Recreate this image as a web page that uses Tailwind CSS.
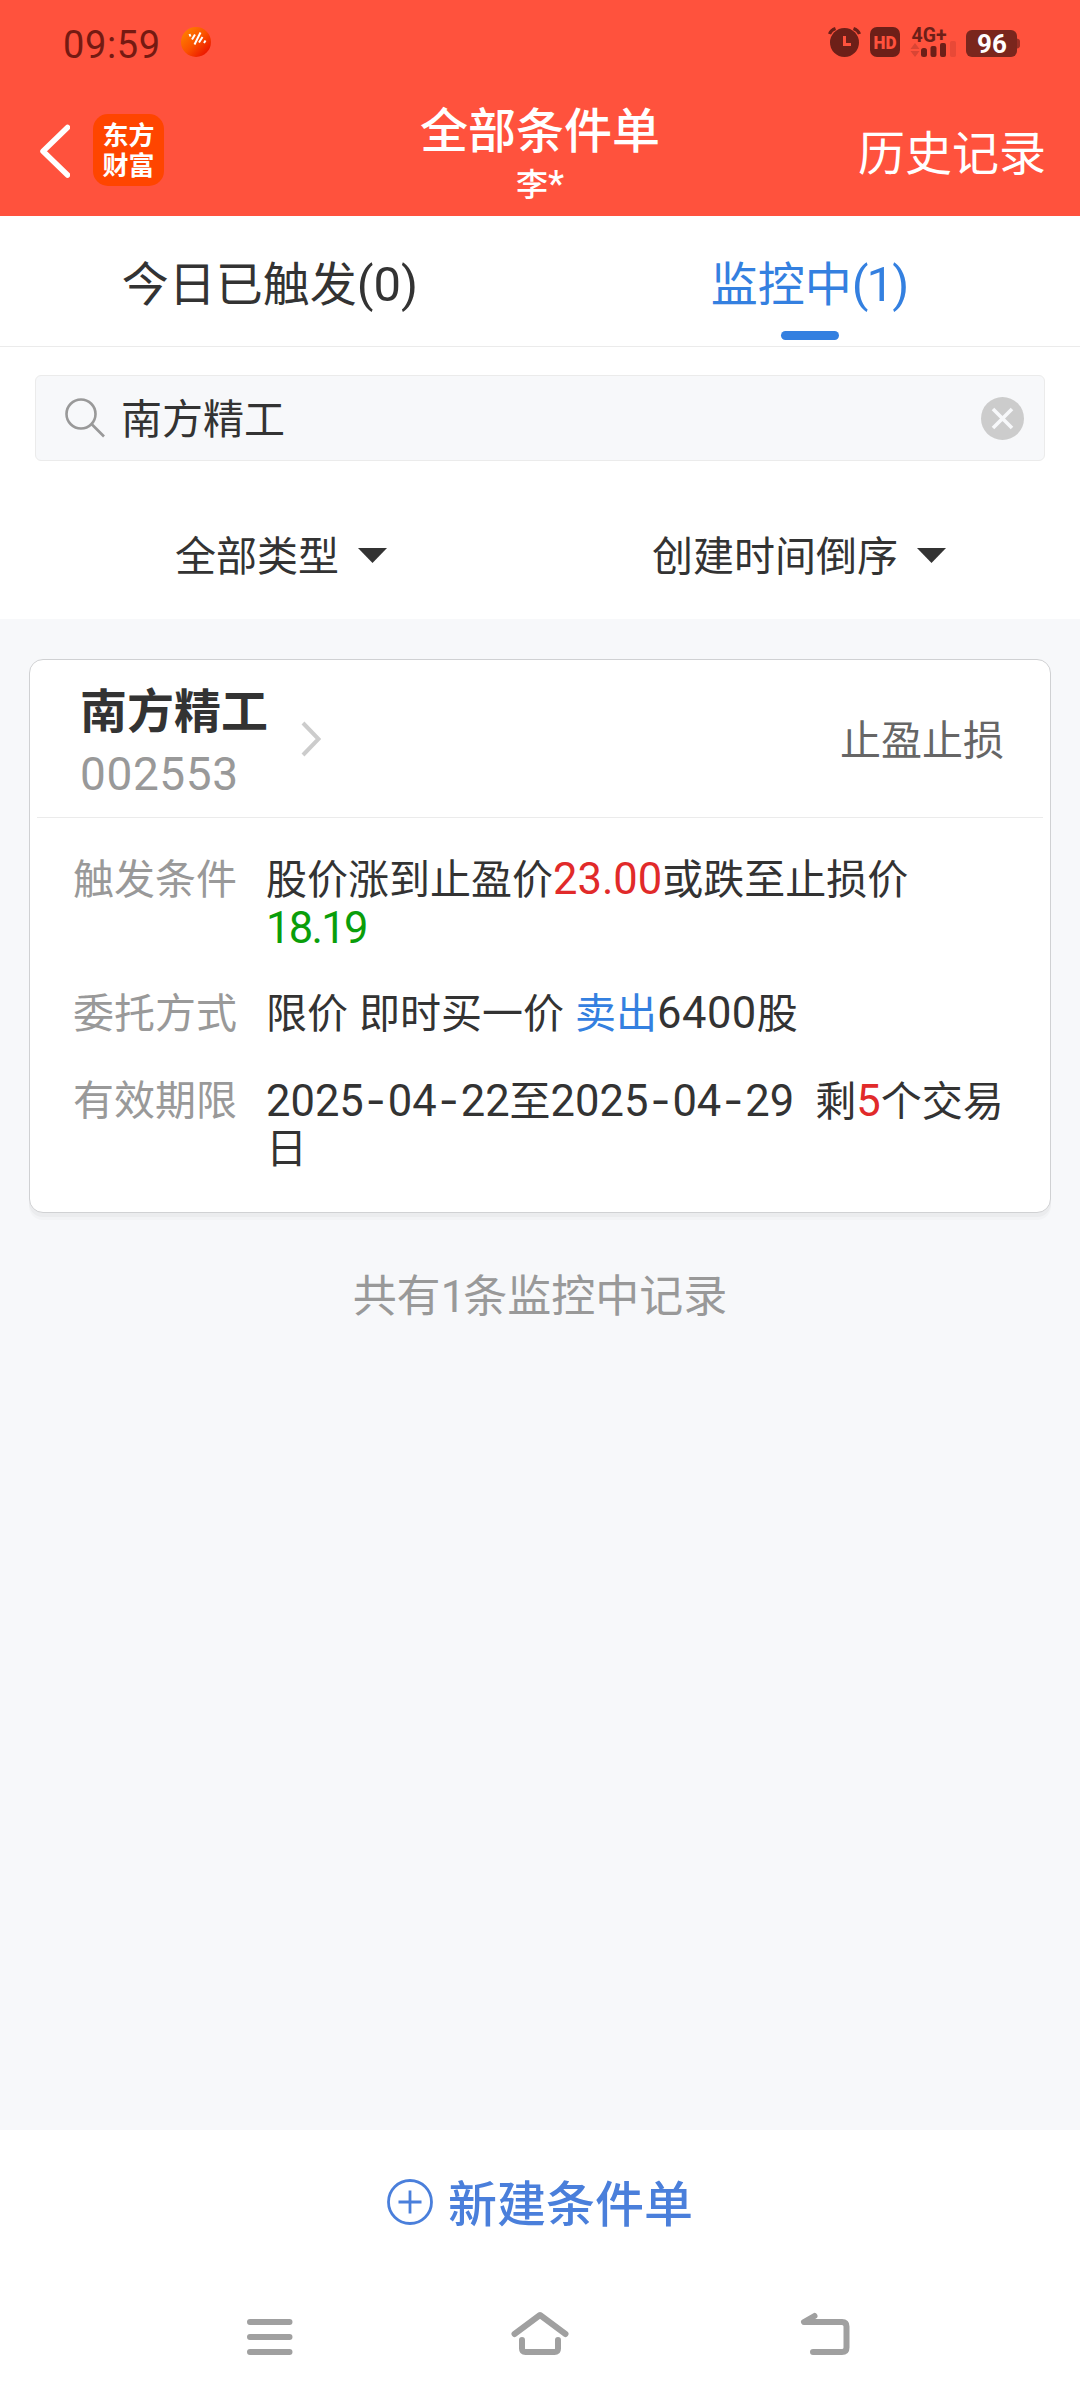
<!DOCTYPE html>
<html lang="zh-CN">
<head>
<meta charset="utf-8">
<title>全部条件单</title>
<script src="https://cdn.jsdelivr.net/npm/@tailwindcss/browser@4"></script>
</head>
<body class="flex h-[2400px] w-[1080px] flex-col overflow-hidden bg-[#f7f8fa] font-['Roboto','Noto_Sans_CJK_SC',sans-serif] text-[#333]">

<header class="flex h-[216px] flex-col bg-[#ff523d] text-white">
  <!-- status bar -->
  <div class="flex h-[84px] items-center justify-between pr-[60px] pl-[63px]">
    <div class="flex items-center gap-[21px] pt-1">
      <span class="w-[97px] whitespace-nowrap pt-px text-[38px] leading-[40px] tracking-[0.6px] text-[#751a12]">09:59</span>
      <svg class="-mt-1 size-[30px]" viewBox="0 0 30 30">
        <defs><linearGradient id="g" x1="0" y1="0" x2="1" y2="1"><stop offset="0" stop-color="#ff8a00"/><stop offset=".5" stop-color="#fb5200"/><stop offset="1" stop-color="#e60000"/></linearGradient></defs>
        <circle cx="15" cy="15" r="15" fill="url(#g)"/>
        <path d="M8.500 7l1 2.500M11 12.500l3-5M13.500 17.500l6-12M18 15.500l3.500-5.500M23 16l1.500-2.500" stroke="#fff" stroke-width="2" fill="none"/>
      </svg>
    </div>
    <div class="flex items-center">
      <svg class="h-[45px] w-[192px]" viewBox="828 20 192 45" fill="#6d1f18">
        <circle cx="844.500" cy="42.500" r="14.500"/>
        <path d="M829.500 34q1.500-4 6-5.500M859.500 34q-1.500-4-6-5.500" fill="none" stroke="#6d1f18" stroke-width="3.200"/>
        <path d="M844.500 36v8.500h6.500" fill="none" stroke="#ff523d" stroke-width="3"/>
        <rect x="870" y="27" width="30" height="30" rx="7"/>
        <text x="885" y="48.500" text-anchor="middle" font-family="Roboto" font-weight="900" font-size="18" fill="#ff523d" textLength="23" lengthAdjust="spacingAndGlyphs">HD</text>
        <text x="911.500" y="41.500" font-family="Roboto" font-weight="700" font-size="20" textLength="35" lengthAdjust="spacingAndGlyphs">4G+</text>
        <path d="M910.500 49l4.500-6 4.500 6zM910.500 51l4.500 6 4.500-6z" fill="#d94534"/>
        <rect x="921" y="48" width="6" height="9" rx="2.500"/>
        <rect x="930.500" y="46" width="6" height="11" rx="2"/>
        <rect x="940" y="43" width="6" height="14" rx="2"/>
        <rect x="950" y="41" width="6" height="16" rx="2" fill="#e84937"/>
        <rect x="966" y="30" width="51" height="27" rx="6" fill="#7a261d"/>
        <path d="M1017 38.500q3 .5 3 3v4q0 2.500-3 3z" fill="#9a2f25"/>
        <text x="992" y="53" text-anchor="middle" font-family="Roboto" font-weight="700" font-size="26" fill="#fff" textLength="30">96</text>
      </svg>
    </div>
  </div>
  <!-- title bar -->
  <div class="grid h-[132px] grid-cols-3">
    <div class="flex items-start gap-[23px] pt-[30px] pl-10">
      <svg class="mt-[9px] h-[56px] w-[30px]" viewBox="40 123 30 56"><path d="M67.500 127.500L43 151.300L67.500 175" fill="none" stroke="#fff" stroke-width="5.500" stroke-linecap="round" stroke-linejoin="round"/></svg>
      <div class="flex h-[72px] w-[71px] flex-col items-center justify-center rounded-[15px] bg-[#ff4500] font-['Noto_Sans_CJK_SC',sans-serif] text-[26px] leading-[30px] font-bold"><span class="h-[30px] leading-[28px]">东方</span><span class="h-[30px] leading-[28px]">财富</span></div>
    </div>
    <div class="flex flex-col items-center pt-[18px]">
      <h1 class="h-[60px] text-[48px] leading-[60px] font-medium whitespace-nowrap">全部条件单</h1>
      <div class="h-10 pt-[2px] text-[32px] leading-[40px] font-medium">李<span class="text-[36px]">*</span></div>
    </div>
    <div class="flex justify-end pt-[39px] pr-[34px]"><span class="h-[60px] text-[47px] leading-[61px]">历史记录</span></div>
  </div>
</header>

<!-- tabs -->
<nav class="grid h-[131px] grid-cols-2 border-b border-[#ebebeb] bg-white text-[47px]">
  <div class="flex justify-center pt-9 leading-[66px]"><span class="h-16 whitespace-nowrap">今日已触发<span class="text-[49px]">(0)</span></span></div>
  <div class="flex flex-col items-center pt-9 leading-[66px] text-[#3480e0]"><span class="h-16 whitespace-nowrap">监控中<span class="text-[49px]"><span class="tracking-[-2px]">(1</span>)</span></span><i class="mt-[15px] h-[9px] w-[58px] rounded-full bg-[#3480e0]"></i></div>
</nav>

<!-- search and filters -->
<section class="flex h-[272px] flex-col bg-white px-[35px] pt-7 text-[41px]">
  <div class="flex h-[86px] items-center rounded-md border border-[#ebebeb] bg-[#f7f8fa] pr-5 pl-[29px]">
    <svg class="size-[40px]" viewBox="0 0 40 40" fill="none" stroke="#999" stroke-width="2.600"><circle cx="16" cy="16" r="14.500"/><path d="M26.500 26L39 38.500"/></svg>
    <span class="ml-4 h-[60px] flex-1 leading-[64px]">南方精工</span>
    <svg class="size-[43px]" viewBox="0 0 43 43"><circle cx="21.500" cy="21.500" r="21.500" fill="#ccc"/><path d="M12 12l19 19M31 12L12 31" stroke="#f7f8fa" stroke-width="3.600"/></svg>
  </div>
  <div class="mt-[64px] flex h-[60px] items-center">
    <div class="ml-[140px] flex items-center gap-[19px]"><span class="h-[60px] leading-[64px]">全部类型</span><svg class="h-[15px] w-[29px]" viewBox="0 0 29 15"><path d="M0 0h29L14.500 15z" fill="#333"/></svg></div>
    <div class="ml-[265px] flex items-center gap-[19px]"><span class="h-[60px] leading-[64px]">创建时间倒序</span><svg class="h-[15px] w-[29px]" viewBox="0 0 29 15"><path d="M0 0h29L14.500 15z" fill="#333"/></svg></div>
  </div>
</section>

<!-- orders -->
<main class="flex flex-1 flex-col px-[29px] pt-10">
  <article class="h-[554px] rounded-[14px] border border-[#d0d1d3] bg-white px-[7px] shadow-[0_4px_0_0_#ebecee,0_7px_0_0_#f2f3f5]">
    <div class="flex h-[158px] items-center justify-between border-b border-[#ebebeb] pr-[39px] pl-[43px]">
      <div class="flex items-center">
        <div class="w-[221px]">
          <h2 class="h-[60px] text-[47px] leading-[66px] font-bold">南方精工</h2>
          <p class="h-[60px] text-[46px] leading-[70px] tracking-[0.6px] text-[#999]">002553</p>
        </div>
        <svg class="h-[36px] w-[20px]" viewBox="0 0 20 36"><path d="M2 2l15.500 16L2 34" fill="none" stroke="#ccc" stroke-width="4"/></svg>
      </div>
      <span class="h-[60px] text-[41px] leading-[64px] text-[#666]">止盈止损</span>
    </div>
    <dl class="grid grid-cols-[193px_1fr] pt-[38px] pl-[36px] text-[41px] leading-[48px] whitespace-nowrap">
      <dt class="text-[#999]">触发条件</dt>
      <dd class="h-[134px]">
        <div class="h-12">股价涨到止盈价<span class="text-[43.5px] text-[#e12a2a]">23.00</span>或跌至止损价</div>
        <div class="h-12 pt-px text-[43.5px] tracking-[-1.7px] text-[#0a9e0a]">18.19</div>
      </dd>
      <dt class="text-[#999]">委托方式</dt>
      <dd class="h-[87px]">限价<span class="inline-block w-[11px]"></span>即时买一价<span class="inline-block w-[11px]"></span><span class="text-[#3480e0]">卖出</span><span class="text-[43.5px] tracking-[0.5px]">6400</span>股</dd>
      <dt class="text-[#999]">有效期限</dt>
      <dd>
        <div class="-mt-px h-[49px]"><span class="text-[43.5px]">2025<span class="inline-block w-[24px] text-center font-['Inter']">-</span>04<span class="inline-block w-[24px] text-center font-['Inter']">-</span>22</span>至<span class="text-[43.5px]">2025<span class="inline-block w-[24px] text-center font-['Inter']">-</span>04<span class="inline-block w-[24px] text-center font-['Inter']">-</span>29</span><span class="inline-block w-[21px]"></span>剩<span class="text-[43.5px] text-[#e12a2a]">5</span>个交易</div>
        <div class="h-12">日</div>
      </dd>
    </dl>
  </article>
  <p class="mt-[54px] h-[60px] text-center text-[44px] leading-[60px] text-[#999]">共有<span class="tracking-[-2px]">1</span>条监控中记录</p>
</main>

<footer class="flex h-[270px] flex-col bg-white">
  <button class="flex h-[146px] items-center justify-center gap-[15px] text-[49px] font-medium text-[#4a7fdb]">
    <svg class="-mt-0.5 size-[46px]" viewBox="0 0 46 46" fill="none" stroke="#4a7fdb" stroke-width="2.800"><circle cx="23" cy="23" r="21.500"/><path d="M11.500 23h23M23 11.500v23"/></svg>
    <span class="h-[60px] leading-[65px]">新建条件单</span>
  </button>
  <!-- system navigation -->
  <svg class="h-[124px] w-[1080px]" viewBox="0 2276 1080 124" fill="none" stroke="#a0a0a0" stroke-width="6" stroke-linecap="round" stroke-linejoin="round">
    <path d="M250 2322h39.500M250 2337h39.500M250 2352h39.500"/>
    <path d="M514.500 2334L540 2315L565.500 2334M522 2340v8.500q0 3.500 3.500 3.500h29q3.500 0 3.500-3.500v-8.500"/>
    <path d="M814.500 2316L804 2322h38q4.500 0 4.500 4.500v21q0 4.500-4.500 4.500h-29"/>
  </svg>
</footer>
</body>
</html>
